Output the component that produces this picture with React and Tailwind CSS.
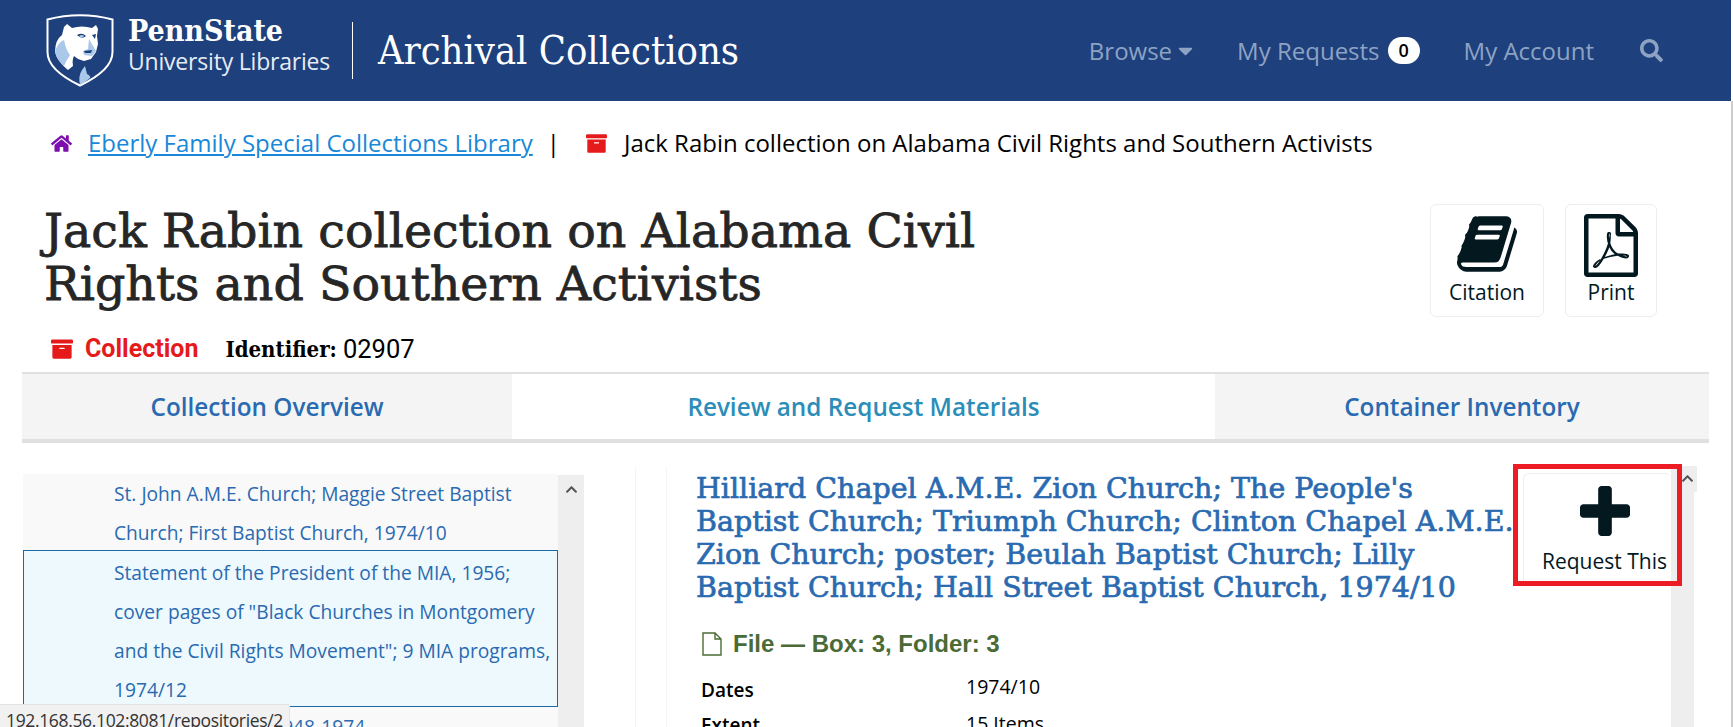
import { FaArchive, FaCaretDown, FaChevronUp, FaHome, FaSearch } from 'react-icons/fa';

const BookIcon = ({ className }) => (
    <svg viewBox="0 0 1664 1792" className={className} fill="currentColor">
        <path d="M1639 478q40 57 18 129l-275 906q-19 64-76.5 107.5t-122.5 43.5h-923q-77 0-148.5-53.5t-99.5-131.5q-24-67-2-127 0-4 3-27t4-37q1-8-3-21.5t-3-19.5q2-11 8-21t16.5-23.5 16.5-23.5q23-38 45-91.5t30-91.5q3-10 .5-30t-.5-28q3-11 17-28t17-23q21-36 42-92t25-90q1-9-2.5-32t.5-28q4-13 22-30.5t22-22.5q19-26 42.5-84.5t27.5-96.5q1-8-3-25.5t-2-26.5q2-8 9-18t18-23 17-21q8-12 16.5-30.5t15-35 16-36 19.5-32 26.5-23.5 36-11.5 47.5 5.5l-1 3q38-9 51-9h761q74 0 114 56t18 130l-274 906q-36 119-71.5 153.5t-128.5 34.5h-869q-27 0-38 15-11 16-1 43 24 70 144 70h923q29 0 56-15.5t35-41.5l300-987q7-22 5-57 38 15 59 43zm-1064 2q-4 13 2 22.5t20 9.5h608q13 0 25.5-9.5t16.5-22.5l21-64q4-13-2-22.5t-20-9.5h-608q-13 0-25.5 9.5t-16.5 22.5zm-83 256q-4 13 2 22.5t20 9.5h608q13 0 25.5-9.5t16.5-22.5l21-64q4-13-2-22.5t-20-9.5h-608q-13 0-25.5 9.5t-16.5 22.5z" />
    </svg>
);

const PdfIcon = ({ className }) => (
    <svg viewBox="128 0 1536 1792" className={className} fill="currentColor">
        <path d="M1596 380q28 28 48 76t20 88v1152q0 40-28 68t-68 28h-1344q-40 0-68-28t-28-68v-1600q0-40 28-68t68-28h896q40 0 88 20t76 48zm-444-244v376h376q-10-29-22-41l-313-313q-12-12-41-22zm384 1528v-1024h-416q-40 0-68-28t-28-68v-416h-768v1536h1280zm-514-593q33 26 84 56 59-7 117-7 147 0 177 49 16 22 2 52 0 1-1 2l-2 2v1q-6 38-71 38-48 0-115-20t-130-53q-221 24-392 83-153 262-242 262-15 0-28-7l-24-12q-1-1-6-5-10-10-6-36 9-40 56-91.5t132-96.5q14-9 23 6 2 2 2 4 52-85 107-197 68-136 104-262-24-82-30.5-159.5t6.5-127.5q11-40 42-40h22q23 0 35 15 18 21 9 68-2 6-4 8 1 3 1 8v30q-2 123-14 192 55 164 146 238zm-576 411q52-24 137-158-51 40-87.5 84t-49.5 74zm398-920q-15 42-2 132 1-7 7-44 0-3 7-43 1-4 4-8-1-1-1-2-1-2-1-3-1-22-13-36 0 1-1 2v2zm-124 661q135-54 284-81-2-1-13-9.5t-16-13.5q-76-67-127-176-27 86-83 197-30 56-45 83zm646-16q-24-24-140-24 76 28 124 28 14 0 18-1 0-1-2-3z" />
    </svg>
);

const PlusIcon = ({ className }) => (
    <svg viewBox="192 128 1408 1408" className={className} fill="currentColor">
        <path d="M1600 736v192q0 40-28 68t-68 28h-416v416q0 40-28 68t-68 28h-192q-40 0-68-28t-28-68v-416h-416q-40 0-68-28t-28-68v-192q0-40 28-68t68-28h416v-416q0-40 28-68t68-28h192q40 0 68 28t28 68v416h416q40 0 68 28t28 68z" />
    </svg>
);

// Penn State shield with the lion shrine head
const ShieldLogo = () => (
    <svg viewBox="0 0 68 73" className="h-[73px] w-[68px] shrink-0">
        <path d="M1.5 5.5 Q34 -3 66.5 5.5 V38 Q66.5 56 34 71.5 Q1.5 56 1.5 38 Z" fill="none" stroke="#fff" strokeWidth="2" />
        <path d="M18 13 L21 10 L26 14 Q36 11 46 14 L50 11 L52 15 L51 22 L52 30 L50 38 L45 45 L38 47 L32 45 L28 42 Q26 46 27 52 L22 56 Q11 47 9 38 Q9 26 16 21 Z" fill="#fff" />
        <path d="M9 38 Q12 28 18 26 Q20 36 24 41 Q20 47 18 52 Q11 46 9 38 Z" fill="#a9c8ea" />
        <path d="M31 21 Q36 18 40 22 Q36 26 31 21 Z M46 21 L50 20 L49 25 Z" fill="#1e407c" />
        <path d="M33 22 Q36 20 38 22 Q36 25 33 22 Z" fill="#a9c8ea" />
        <path d="M43 25 L42 35 L37 37 L38 41 L46 42 L50 37 L47 32 Z" fill="#a9c8ea" />
        <path d="M38 37 L46 36 L45 39 L39 39 Z" fill="#1e407c" />
        <path d="M34 72 L34 71 Q32 62 36 56 L39 52 L41 60 Q45 62 44 64 Q38 69 34 71 Z" fill="#a9c8ea" />
    </svg>
);

const App = () => {
    const slab = "font-['DejaVu_Serif',serif] [font-stretch:condensed]";
    const slabHeading = "font-['DejaVu_Serif',serif]";

    return (
        <div className="flex h-[727px] w-[1733px] overflow-hidden bg-white font-['Open_Sans',sans-serif]">
            <div className="w-[1731px] shrink-0">
                <header className="flex h-[101px] items-center bg-[#1e407c] pl-[46px] pr-[68px] text-white">
                    <ShieldLogo />
                    <div className="mb-[11px] ml-[14px] w-[226px] shrink-0">
                        <div className={`${slab} text-[30px] font-bold leading-[32px]`}>PennState</div>
                        <div className="text-[23px] leading-[28px] tracking-[-0.2px] text-[#e6ecf5]">University Libraries</div>
                    </div>
                    <div className="ml-[-2px] h-[57px] w-px bg-white"></div>
                    <div className={`${slab} ml-[25px] text-[39.5px] leading-none`}>Archival Collections</div>
                    <nav className="ml-auto flex items-center text-[24px] text-[#8ea3c4]">
                        <span>Browse</span>
                        <FaCaretDown className="ml-[2px] text-[23px]" />
                        <span className="ml-[40px]">My Requests</span>
                        <span className="ml-[8px] flex h-[27px] w-[32px] items-center justify-center rounded-[14px] bg-white text-[18px] font-semibold text-black">0</span>
                        <span className="ml-[44px]">My Account</span>
                        <FaSearch className="ml-[46px] text-[23px]" />
                    </nav>
                </header>

                <div className="ml-[51px] mt-[20px] flex h-[44px] items-center text-[24px]">
                    <FaHome className="text-[21px] text-[#7c0fae]" />
                    <a className="ml-[16px] text-[#1a88d8] underline">Eberly Family Special Collections Library</a>
                    <span className="ml-[14px] text-black">|</span>
                    <FaArchive className="ml-[26px] text-[21px] text-[#e51a1a]" />
                    <span className="ml-[17px] text-black">Jack Rabin collection on Alabama Civil Rights and Southern Activists</span>
                </div>

                <div className="mt-[39px] flex h-[113px] pl-[44px] pr-[74px]">
                    <h1 className={`${slabHeading} text-[47.5px] font-normal leading-[53px] text-[#262626] [-webkit-text-stroke:0.8px_currentColor]`}>
                        Jack Rabin collection on Alabama Civil
                        <br />
                        Rights and Southern Activists
                    </h1>
                    <div className="ml-auto flex gap-[21px] text-[21px] text-[#03181f]">
                        <div className="flex h-[113px] w-[114px] flex-col items-center rounded-[6px] border border-[#eeeeee] pt-[6px]">
                            <BookIcon className="h-[66px] w-[60px]" />
                            <span className="mt-[1px] leading-[28px]">Citation</span>
                        </div>
                        <div className="flex h-[113px] w-[92px] flex-col items-center rounded-[6px] border border-[#eeeeee] pt-[9px]">
                            <PdfIcon className="h-[63px] w-[54px]" />
                            <span className="mt-[1px] leading-[28px]">Print</span>
                        </div>
                    </div>
                </div>

                <div className="flex h-[55px] items-center pl-[51px] pt-[9px]">
                    <FaArchive className="text-[22px] text-[#e51a1a]" />
                    <span className="ml-[12px] font-['Roboto',sans-serif] text-[25px] font-bold text-[#e51a1a]">Collection</span>
                    <span className={`${slab} ml-[27px] text-[22px] font-bold text-black`}>Identifier:</span>
                    <span className="ml-[6px] font-['Roboto',sans-serif] text-[25.5px] text-black">02907</span>
                </div>

                <div className="ml-[22px] flex h-[71px] w-[1687px] border-b-4 border-t-2 border-[#e0e0e0] text-[24.3px] font-semibold">
                    <div className="flex w-[490px] items-center justify-center bg-[#f4f4f4] pt-[1px] text-[#2a6ab0]">Collection Overview</div>
                    <div className="flex w-[703px] items-center justify-center bg-white pt-[1px] text-[#2b8db8]">Review and Request Materials</div>
                    <div className="flex flex-1 items-center justify-center bg-[#f4f4f4] pt-[1px] text-[#2a6ab0]">Container Inventory</div>
                </div>

                <div className="relative mt-[23px] flex">
                    <div className="ml-[23px] mt-[9px] flex h-[252px] w-[561px] shrink-0">
                        <div className="w-[535px] shrink-0 whitespace-nowrap text-[19.2px] text-[#2a6ab0]">
                            <div className="h-[76px] bg-[#f9f9f9] pl-[91px] leading-[39px]">
                                <div className="-mt-[1px]">
                                    St. John A.M.E. Church; Maggie Street Baptist
                                    <br />
                                    Church; First Baptist Church, 1974/10
                                </div>
                            </div>
                            <div className="h-[157px] border border-[#1a6aa8] bg-[#eef9fe] pl-[90px] pt-[2px] leading-[39px]">
                                Statement of the President of the MIA, 1956;
                                <br />
                                cover pages of "Black Churches in Montgomery
                                <br />
                                and the Civil Rights Movement"; 9 MIA programs,
                                <br />
                                1974/12
                            </div>
                            <div className="bg-[#f9f9f9] pl-[91px] leading-[39px]">Church program, 1948-1974</div>
                        </div>
                        <div className="relative flex-1 bg-[#eeeeee]">
                            <FaChevronUp className="absolute left-[7px] top-[8px] text-[13px] text-[#555555]" />
                        </div>
                    </div>

                    <div className="ml-[51px] w-[31px] shrink-0 border-l border-[#f5f5f5]"></div>

                    <div className="flex h-[261px] flex-1 border-l border-[#f5f5f5] pl-[29px]">
                        <div className="min-w-0 flex-1 overflow-hidden pt-[6px]">
                            <h2 className={`${slabHeading} whitespace-nowrap text-[28.5px] font-normal leading-[33px] text-[#2a6ab0] [-webkit-text-stroke:0.7px_currentColor]`}>
                                Hilliard Chapel A.M.E. Zion Church; The People's
                                <br />
                                Baptist Church; Triumph Church; Clinton Chapel A.M.E.
                                <br />
                                Zion Church; poster; Beulah Baptist Church; Lilly
                                <br />
                                Baptist Church; Hall Street Baptist Church, 1974/10
                            </h2>
                            <div className="ml-[6px] mt-[22px] flex items-center font-['Liberation_Sans',sans-serif] text-[24px] font-bold text-[#4a6b35]">
                                <svg viewBox="0 0 20 24" className="h-[24px] w-[20px]" fill="none" stroke="currentColor" strokeWidth="1.4">
                                    <path d="M1 1 H13 L19 7 V23 H1 Z M13 1 V7 H19" />
                                </svg>
                                <span className="ml-[11px]">File — Box: 3, Folder: 3</span>
                            </div>
                            <div className="ml-[5px] mt-[12px] grid grid-cols-[265px_1fr] leading-[26px] text-black">
                                <span className="mt-[3px] text-[19px] font-semibold">Dates</span>
                                <span className="text-[19.5px]">1974/10</span>
                                <span className="mt-[9px] text-[19px] font-semibold">Extent</span>
                                <span className="mt-[8px] text-[19.5px]">15 Items</span>
                            </div>
                        </div>
                        <div className="relative w-[23px] shrink-0 bg-[#eeeeee]">
                            <div className="absolute left-0 top-0 h-[26px] w-[26px] bg-[#eeeeee]">
                                <FaChevronUp className="absolute left-[10px] top-[6px] text-[13px] text-[#555555]" />
                            </div>
                        </div>
                        <div className="w-[37px] shrink-0"></div>
                    </div>

                    <div className="absolute left-[1523px] top-[7px] flex h-[113px] w-[148px] flex-col items-center rounded-t-[6px] border-l border-t border-[#eeeeee] bg-white pl-[14px] pt-[12px] text-[#03181f]">
                        <PlusIcon className="h-[50px] w-[50px] shrink-0" />
                        <span className="mt-[11px] whitespace-nowrap text-[21px] leading-[28px]">Request This</span>
                    </div>
                    <div className="pointer-events-none absolute left-[1513px] top-[-2px] h-[122px] w-[169px] border-[5px] border-[#ed1c24]"></div>
                </div>
            </div>
            <div className="mt-[101px] w-[2px] bg-[#cccccc]"></div>

            <div className="absolute left-0 top-[704px] h-[23px] w-[290px] overflow-hidden rounded-tr-[3px] border-r border-t border-[#e3e3e3] bg-[#f1f1f1] pl-[6px] text-[17.5px] leading-[30px] tracking-[-0.35px] text-[#333333]">
                192.168.56.102:8081/repositories/2
            </div>
        </div>
    );
};

export default App;
